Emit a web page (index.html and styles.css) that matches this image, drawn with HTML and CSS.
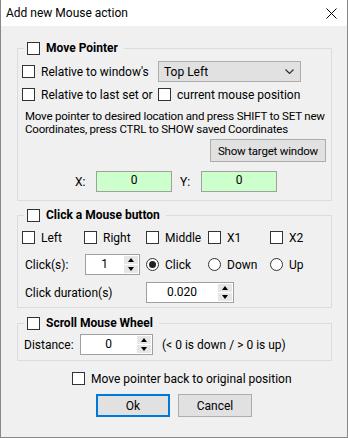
FILE: index.html
```html
<!DOCTYPE html>
<html lang="en">
<head>
  <meta charset="UTF-8" />
  <title>Add new Mouse action</title>
  <link rel="stylesheet" href="styles.css">
</head>
<body>

  <div class="window">
    <div class="titlebar">
      <span class="title">Add new Mouse action</span>
      <svg class="close" width="11" height="11" viewBox="0 0 11 11"><path d="M0.5 0.5L10.5 10.5M10.5 0.5L0.5 10.5" stroke="#000" stroke-width="1"/></svg>
    </div>

    <div class="content">
      <fieldset class="group">
        <legend><span class="check"></span><b>Move Pointer</b></legend>
        <div class="pair row-combo">
          <label class="opt"><span class="check"></span>Relative to window's</label>
          <div class="combo">Top Left
            <svg width="9" height="5" viewBox="0 0 9 5"><path d="M0.5 0.5L4.5 4.5L8.5 0.5" fill="none" stroke="#333" stroke-width="1.2"/></svg>
          </div>
        </div>
        <div class="pair row-opts">
          <label class="opt"><span class="check"></span>Relative to last set or</label>
          <label class="opt"><span class="check"></span>current mouse position</label>
        </div>
        <p class="hint">Move pointer to desired location and press SHIFT to SET new<br>Coordinates, press CTRL to SHOW saved Coordinates</p>
        <div class="target-row">
          <button class="btn btn-target">Show target window</button>
        </div>
        <div class="coords">
          <span class="coord-label">X:</span>
          <div class="coord">0</div>
          <span class="coord-label">Y:</span>
          <div class="coord">0</div>
        </div>
      </fieldset>

      <fieldset class="group group-click">
        <legend><span class="check"></span><b>Click a Mouse button</b></legend>
        <div class="cols row-buttons">
          <label class="opt"><span class="check"></span>Left</label>
          <label class="opt"><span class="check"></span>Right</label>
          <label class="opt"><span class="check"></span>Middle</label>
          <label class="opt"><span class="check"></span>X1</label>
          <label class="opt"><span class="check"></span>X2</label>
        </div>
        <div class="cols row-clicks">
          <span class="field-label">Click(s):</span>
          <div class="spin spin-clicks"><span class="val">1</span><span class="arrows"><i class="up"></i><i class="down"></i></span></div>
          <label class="opt"><span class="radio on"></span>Click</label>
          <label class="opt"><span class="radio"></span>Down</label>
          <label class="opt"><span class="radio"></span>Up</label>
        </div>
        <div class="cols row-duration">
          <span class="field-label span2">Click duration(s)</span>
          <div class="spin spin-duration"><span class="val">0.020</span><span class="arrows"><i class="up"></i><i class="down"></i></span></div>
        </div>
      </fieldset>

      <fieldset class="group group-scroll">
        <legend><span class="check"></span><b>Scroll Mouse Wheel</b></legend>
        <div class="row-distance">
          <span class="field-label">Distance:</span>
          <div class="spin spin-distance"><span class="val">0</span><span class="arrows"><i class="up"></i><i class="down"></i></span></div>
          <span class="note">(&lt; 0 is down / &gt; 0 is up)</span>
        </div>
      </fieldset>

      <label class="opt back-row"><span class="check"></span>Move pointer back to original position</label>

      <div class="actions">
        <button class="btn btn-ok">Ok</button>
        <button class="btn">Cancel</button>
      </div>
    </div>
  </div>

</body>
</html>
```

FILE: styles.css
```css
* { box-sizing: border-box; }

body {
  margin: 0;
  font-family: Roboto, "Noto Sans", sans-serif;
  font-size: 12px;
  color: #000;
  background: #f0f0f0;
}

.window {
  width: 348px;
  height: 438px;
  background: #f0f0f0;
  border: 1px solid #888;
  border-top: none;
}

.titlebar {
  height: 26px;
  background: #fff;
  display: flex;
  align-items: center;
  justify-content: space-between;
  padding: 0 10px 0 5px;
}

.title {
  line-height: 14px;
}

.content {
  padding: 15px 15px 0 16px;
}

/* group boxes */
.group {
  margin: 0;
  border: 1px solid #dcdcdc;
  padding: 0 5px 8px 4px;
  min-width: 0;
}

.group legend {
  margin-left: 2px;
  padding: 0 6px 0 3px;
  line-height: 14px;
  display: flex;
  align-items: center;
  gap: 6px;
}

.group legend b { font-weight: 700; }

.group-click { margin-top: 7px; padding-bottom: 4px; }
.group-scroll { margin-top: 8px; padding-bottom: 5px; }

/* checkboxes and radios */
.check {
  width: 13px;
  height: 13px;
  border: 1px solid #333;
  background: #fff;
  flex: none;
}

.radio {
  width: 13px;
  height: 13px;
  border: 1px solid #333;
  border-radius: 50%;
  background: #fff;
  flex: none;
  display: flex;
  align-items: center;
  justify-content: center;
}

.radio.on::after {
  content: "";
  width: 7px;
  height: 7px;
  border-radius: 50%;
  background: #222;
}

.opt {
  display: flex;
  align-items: center;
  gap: 6px;
  height: 17px;
  line-height: 14px;
  white-space: nowrap;
}

/* move pointer group */
.pair {
  display: grid;
  grid-template-columns: 136px 1fr;
  align-items: center;
}

.row-combo { margin-top: 6px; height: 21px; }
.row-opts { margin-top: 4px; }

.combo {
  width: 143px;
  height: 21px;
  background: #e1e1e1;
  border: 1px solid #adadad;
  display: flex;
  align-items: center;
  justify-content: space-between;
  padding: 0 6px 0 5px;
}

.hint {
  margin: 7px 0 0 3px;
  font-size: 11.5px;
  line-height: 13px;
  white-space: nowrap;
  letter-spacing: -0.2px;
}

.target-row {
  display: flex;
  justify-content: flex-end;
  margin-top: 3px;
}

.btn {
  font-family: inherit;
  font-size: inherit;
  color: #000;
  background: #e1e1e1;
  border: 1px solid #adadad;
  height: 23px;
  padding: 0;
  width: 74px;
  white-space: nowrap;
}

.btn-target {
  width: 116px;
  font-size: 11.5px;
  letter-spacing: -0.2px;
}

.coords {
  display: flex;
  align-items: center;
  margin-top: 9px;
  padding-left: 53px;
}

.coord-label { width: 21px; }
.coord-label + .coord { margin-right: 8px; }

.coord {
  width: 76px;
  height: 21px;
  background: #ccffcc;
  border: 1px solid #a0a0a0;
  text-align: center;
  line-height: 17px;
}

/* click group */
.cols {
  display: grid;
  grid-template-columns: repeat(5, 62px);
  align-items: center;
}

.row-buttons { margin-top: 7px; }
.row-clicks { margin-top: 8px; height: 21px; }
.row-duration { margin-top: 7px; height: 21px; }

.field-label { padding-left: 3px; }
.span2 { grid-column: span 2; }

.spin {
  height: 21px;
  background: #fff;
  border: 1px solid #a0a0a0;
  display: flex;
}

.spin .val {
  flex: 1;
  text-align: center;
  line-height: 18px;
}

.arrows {
  width: 14px;
  margin: 1px;
  display: flex;
  flex-direction: column;
  gap: 1px;
}

.arrows i {
  flex: 1;
  background: #e6e6e6;
  display: flex;
  align-items: center;
  justify-content: center;
}

.arrows i::after {
  content: "";
  border-left: 3px solid transparent;
  border-right: 3px solid transparent;
}

.arrows .up::after { border-bottom: 4px solid #000; }
.arrows .down::after { border-top: 4px solid #000; }

.spin-clicks { width: 55px; margin-left: 1px; }
.spin-duration { width: 88px; }

/* scroll group */
.row-distance {
  display: flex;
  align-items: center;
  margin-top: 4px;
  height: 21px;
}

.row-distance .field-label { padding-left: 2px; width: 58px; }
.spin-distance { width: 73px; margin-right: 9px; }

/* bottom */
.back-row {
  margin: 9px 0 0 55px;
}

.actions {
  display: flex;
  justify-content: center;
  gap: 8px;
  margin-top: 7px;
  padding-right: 1px;
}

.btn-ok {
  border: 2px solid #0078d7;
}
```
